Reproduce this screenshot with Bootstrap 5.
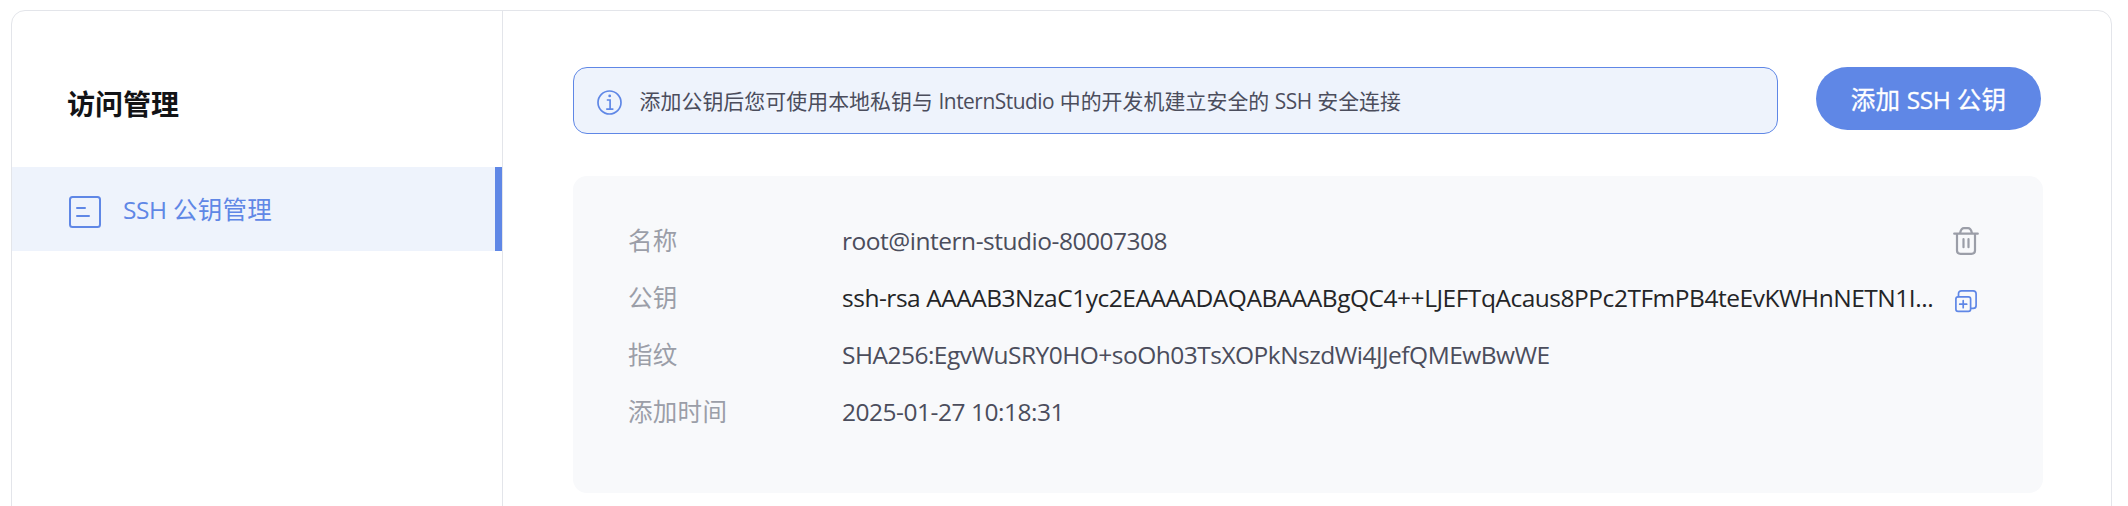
<!DOCTYPE html>
<html lang="zh-CN">
<head>
<meta charset="utf-8">
<meta name="viewport" content="width=device-width, initial-scale=1">
<title>访问管理</title>
<link href="https://cdn.jsdelivr.net/npm/bootstrap@5.3.0/dist/css/bootstrap.min.css" rel="stylesheet">
<style>
body{font-family:"Open Sans","Noto Sans CJK SC",sans-serif;font-size:24.5px;line-height:36px;color:#4b4d5c;height:506px;overflow:hidden;padding:10px 16px 0 11px}
.shell{height:520px;border:1px solid #e3e5ea;border-radius:14px}
.side{width:491px;border-right:1px solid #e3e5ea}
.side h1{font-size:28px;line-height:40px;font-weight:700;color:#121316;margin:73px 0 43px 55px}
.side-item{height:84px;padding:2px 0 0 57px;border-right:7px solid #5f87e6;background:#eef3fc;color:#5f87e6;gap:22px}
.side-item svg{margin-top:4px}
.side-item>span{letter-spacing:.2px}
.side-item .latin,.latin{letter-spacing:-.48px}
.main{padding:56px 68px 0 70px}
.tip{width:1205px;height:67px;padding-left:22.5px;gap:18px;border:1px solid #5f87e6;border-radius:14px;background:#eef3fc;font-size:20.9px;letter-spacing:.07px}
.btn-add{width:225px;height:63px;margin-right:2px;background:#5f87e6;color:#fff;font-size:24.5px;letter-spacing:.2px;-webkit-text-stroke:.3px #fff}
.keycard{margin-top:42px;width:1470px;height:317px;padding:47px 64px 0 55px;border-radius:14px;background:#f8f9fb}
.entry{height:57px}
.entry dt{width:214px;font-weight:400;letter-spacing:.3px;color:#9b9ea8}
.entry dd{flex:1}
.entry .key-text{color:#242527;letter-spacing:-.475px}
.entry .hash{letter-spacing:-.515px}
svg{flex:none;display:block}
</style>
</head>
<body>
<div class="shell d-flex">
  <aside class="side">
    <h1>访问管理</h1>
    <a class="side-item d-flex align-items-center text-decoration-none">
      <svg width="32" height="32" viewBox="0 0 32 32" fill="none" stroke="currentColor" stroke-width="2" stroke-linecap="round"><rect x="1" y="1" width="30" height="30" rx="2.5"/><path d="M8 12h8M8 20h12"/></svg>
      <span><span class="latin">SSH</span> 公钥管理</span>
    </a>
  </aside>
  <main class="main flex-grow-1">
    <div class="d-flex align-items-start justify-content-between">
      <div class="tip d-flex align-items-center">
        <svg class="mt-1" width="25" height="25" viewBox="0 0 25 25" fill="none" stroke="#5f87e6" stroke-width="1.7"><circle cx="12.5" cy="12.5" r="11.5"/><path d="M9.8 10h3.3v8.9M9.2 19.2h7.2"/><circle cx="12.7" cy="5.9" r="1.4" fill="#5f87e6" stroke="none"/></svg>
        <span>添加公钥后您可使用本地私钥与 <span class="latin">InternStudio</span> 中的开发机建立安全的 <span class="latin">SSH</span> 安全连接</span>
      </div>
      <button class="btn btn-add rounded-pill px-0 pb-0 pt-1">添加 <span class="latin">SSH</span> 公钥</button>
    </div>
    <dl class="keycard mb-0">
      <div class="entry d-flex"><dt>名称</dt><dd class="latin">root@intern-studio-80007308</dd>
        <svg class="mt-1" width="26" height="28" viewBox="0 0 26 28" fill="none" stroke="#9b9ea8" stroke-width="2.2" stroke-linecap="round"><path d="M1.200 6.700h23.600M4 7v16.500q0 3.300 3.500 3.300h11q3.500 0 3.500-3.300V7M7 6.300c.8-3.500 2.200-5.100 4-5.100h4c1.800 0 3.200 1.600 4 5.100M10.500 12.200v8M15.500 12.200v8"/></svg>
      </div>
      <div class="entry d-flex"><dt>公钥</dt><dd class="key-text text-nowrap">ssh-rsa AAAAB3NzaC1yc2EAAAADAQABAAABgQC4++LJEFTqAcaus8PPc2TFmPB4teEvKWHnNETN1I...</dd>
        <svg class="mt-2" width="24" height="25" viewBox="0 -2 24 25" fill="none" stroke="#5f87e6" stroke-width="1.7" stroke-linecap="round"><rect x=".9" y="6.9" width="14.7" height="14.500" rx="2.2"/><path d="M3.500 6.500V3.800Q3.500.8 6.500.8h11.600q3 0 3 3v11.600q0 3-3 3h-2M8.200 10.700v7M4.700 14.200h7"/></svg>
      </div>
      <div class="entry d-flex"><dt>指纹</dt><dd class="hash">SHA256:EgvWuSRY0HO+soOh03TsXOPkNszdWi4JJefQMEwBwWE</dd></div>
      <div class="entry d-flex"><dt>添加时间</dt><dd class="latin">2025-01-27 10:18:31</dd></div>
    </dl>
  </main>
</div>
<script src="https://cdn.jsdelivr.net/npm/bootstrap@5.3.0/dist/js/bootstrap.bundle.min.js"></script>
</body>
</html>
